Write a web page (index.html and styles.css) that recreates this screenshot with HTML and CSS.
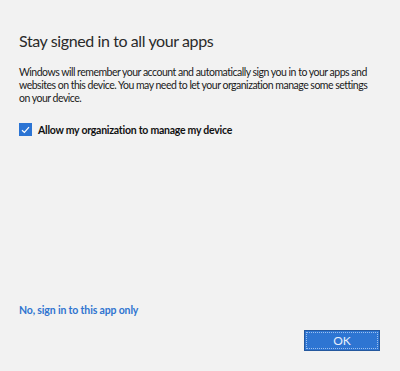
FILE: index.html
```html
<!DOCTYPE html>
<html lang="en">
<head>
    <meta charset="UTF-8">
    <meta name="viewport" content="width=device-width, initial-scale=1.0">
    <title>Stay signed in to all your apps</title>
    <link rel="stylesheet" href="styles.css">
</head>
<body>
    <div class="dialog">
        <h1 class="title">Stay signed in to all your apps</h1>
        <p class="message">Windows will remember your account and automatically sign you in to your apps and websites on this device. You may need to let your organization manage some settings on your device.</p>

        <label class="check-row">
            <input type="checkbox" class="check-input" checked>
            <span class="check-box">
                <svg width="9" height="8" viewBox="0 0 9 8"><path d="M1 4.2 L3.4 6.5 L8 1.2" fill="none" stroke="#fff" stroke-width="1.2"/></svg>
            </span>
            <span class="check-label">Allow my organization to manage my device</span>
        </label>

        <div class="spacer"></div>

        <a href="#" class="app-only">No, sign in to this app only</a>

        <div class="actions">
            <button class="ok-button">OK</button>
        </div>
    </div>
</body>
</html>
```

FILE: styles.css
```css
body {
    margin: 0;
    background-color: #f2f2f2;
    font-family: Lato, "Noto Sans", sans-serif;
    color: #1a1a1a;
}
.dialog {
    height: 371px;
    box-sizing: border-box;
    padding: 29px 20px 20px 19px;
    display: flex;
    flex-direction: column;
}
.title {
    margin: 0;
    font-size: 16px;
    font-weight: 400;
    letter-spacing: -0.4px;
    line-height: 24px;
    color: #2a2a2a;
}
.message {
    margin: 13px 0 0;
    font-size: 10.5px;
    letter-spacing: -0.5px;
    line-height: 13px;
    color: #1a1a1a;
}
.check-row {
    display: flex;
    align-items: center;
    gap: 6px;
    margin-top: 18px;
    cursor: pointer;
}
.check-input {
    display: none;
}
.check-box {
    width: 13px;
    height: 13px;
    background-color: #2b74d4;
    display: flex;
    align-items: center;
    justify-content: center;
}
.check-label {
    font-size: 10.5px;
    font-weight: 700;
    letter-spacing: -0.25px;
    color: #111;
}
.spacer {
    flex: 1;
}
.app-only {
    font-size: 10.5px;
    font-weight: 700;
    letter-spacing: -0.15px;
    color: #2f74d0;
    text-decoration: none;
}
.actions {
    display: flex;
    justify-content: flex-end;
    margin-top: 14px;
}
.ok-button {
    width: 76px;
    height: 21px;
    padding: 0;
    font-family: inherit;
    font-size: 12px;
    color: #e8f0fb;
    background-color: #2e75d2;
    border: 1px solid #24589e;
    outline: 1px dotted #9cc0ee;
    outline-offset: -3px;
    cursor: pointer;
}
```
